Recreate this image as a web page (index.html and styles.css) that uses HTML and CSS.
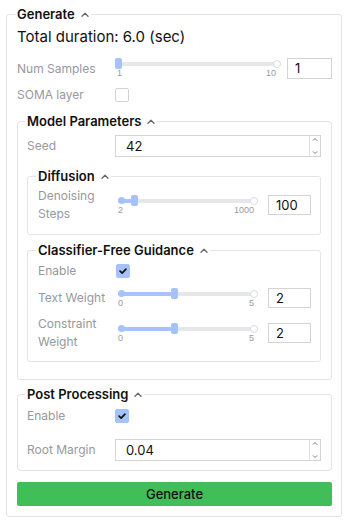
FILE: index.html
```html
<!DOCTYPE html>
<html>
<head>
<meta charset="utf-8">
<link rel="stylesheet" href="styles.css">
</head>
<body>
<fieldset class="box outer">
  <legend class="lg">Generate<svg class="caret" width="8" height="5" viewBox="0 0 8 5"><path d="M1 4.2 L4 1.2 L7 4.2"/></svg></legend>
  <div class="total">Total duration: 6.0 (sec)</div>

  <div class="row r-num">
    <div class="lbl l100">Num Samples</div>
    <div class="slider atmin" style="--p:0">
      <div class="track"><div class="rail"></div><div class="fill"></div><span class="start"></span><span class="end"></span><span class="thumb"></span></div>
      <div class="ticks"><span>1</span><span>10</span></div>
    </div>
    <div class="num n45">1</div>
  </div>

  <div class="row r-soma">
    <div class="lbl l100">SOMA layer</div>
    <span class="check"></span>
  </div>

  <fieldset class="box sub model">
    <legend class="lg">Model Parameters<svg class="caret" width="8" height="5" viewBox="0 0 8 5"><path d="M1 4.2 L4 1.2 L7 4.2"/></svg></legend>

    <div class="row r-seed">
      <div class="lbl l88">Seed</div>
      <div class="spin"><span class="val">42</span><span class="arrows"><svg width="10" height="22" viewBox="0 0 10 22"><path d="M3 5.5 L5 3.5 L7 5.5"/><path d="M3 16.5 L5 18.5 L7 16.5"/></svg></span></div>
    </div>

    <fieldset class="box inner diff">
      <legend class="lg">Diffusion<svg class="caret" width="8" height="5" viewBox="0 0 8 5"><path d="M1 4.2 L4 1.2 L7 4.2"/></svg></legend>
      <div class="row r-steps">
        <div class="lbl l80">Denoising Steps</div>
        <div class="slider" style="--p:0.098">
          <div class="track"><div class="rail"></div><div class="fill"></div><span class="start"></span><span class="end"></span><span class="thumb"></span></div>
          <div class="ticks"><span>2</span><span>1000</span></div>
        </div>
        <div class="num n43">100</div>
      </div>
    </fieldset>

    <fieldset class="box inner cfg">
      <legend class="lg">Classifier-Free Guidance<svg class="caret" width="8" height="5" viewBox="0 0 8 5"><path d="M1 4.2 L4 1.2 L7 4.2"/></svg></legend>
      <div class="row r-enable">
        <div class="lbl l80">Enable</div>
        <span class="check on"><svg width="14" height="14" viewBox="0 0 14 14"><path d="M3.6 7.2 L6 9.4 L10.4 4.8"/></svg></span>
      </div>
      <div class="row r-tw">
        <div class="lbl l80">Text Weight</div>
        <div class="slider" style="--p:0.4">
          <div class="track"><div class="rail"></div><div class="fill"></div><span class="start"></span><span class="end"></span><span class="thumb"></span></div>
          <div class="ticks"><span>0</span><span>5</span></div>
        </div>
        <div class="num n43">2</div>
      </div>
      <div class="row r-cw">
        <div class="lbl l80">Constraint Weight</div>
        <div class="slider" style="--p:0.4">
          <div class="track"><div class="rail"></div><div class="fill"></div><span class="start"></span><span class="end"></span><span class="thumb"></span></div>
          <div class="ticks"><span>0</span><span>5</span></div>
        </div>
        <div class="num n43">2</div>
      </div>
    </fieldset>
  </fieldset>

  <fieldset class="box sub post">
    <legend class="lg">Post Processing<svg class="caret" width="8" height="5" viewBox="0 0 8 5"><path d="M1 4.2 L4 1.2 L7 4.2"/></svg></legend>
    <div class="row r-penable">
      <div class="lbl l88">Enable</div>
      <span class="check on"><svg width="14" height="14" viewBox="0 0 14 14"><path d="M3.6 7.2 L6 9.4 L10.4 4.8"/></svg></span>
    </div>
    <div class="row r-root">
      <div class="lbl l88">Root Margin</div>
      <div class="spin"><span class="val">0.04</span><span class="arrows"><svg width="10" height="22" viewBox="0 0 10 22"><path d="M3 5.5 L5 3.5 L7 5.5"/><path d="M3 16.5 L5 18.5 L7 16.5"/></svg></span></div>
    </div>
  </fieldset>

  <button class="gen">Generate</button>
</fieldset>
</body>
</html>
```

FILE: styles.css
```css
* { box-sizing: border-box; }
html, body { margin: 0; background: #fff; }
body {
  font-family: Inter, "Noto Sans", sans-serif;
  color: #111;
  padding-top: 6px;
}
.box {
  border: 1px solid #e4e4e7;
  border-radius: 3px;
  margin: 0;
  min-width: 0;
  display: flex;
  flex-direction: column;
}
.outer {
  margin: 0 4px 0 6px;
  padding: 0 9px 10px 10px;
}
.sub { padding: 0 10px 0 9px; }
.model { margin-top: 9px; padding-bottom: 17px; }
.post { margin-top: 6px; padding-bottom: 9px; }
.inner { padding: 0 9px 9px 10px; }
.diff { margin-top: 11px; padding-bottom: 11px; }
.cfg { margin-top: 7px; padding-bottom: 10px; }

.lg {
  font-size: 13px;
  font-weight: 600;
  line-height: 16px;
  padding: 0 2px;
  margin-left: -2px;
  color: #111;
}
.caret {
  margin-left: 6px;
  vertical-align: 2px;
  fill: none;
  stroke: #666;
  stroke-width: 1.3;
  stroke-linecap: round;
  stroke-linejoin: round;
}
.total {
  margin-top: 5px;
  font-size: 15px;
  line-height: 20px;
  color: #111;
}
.row { display: flex; align-items: center; }
.lbl {
  flex: none;
  font-size: 12px;
  line-height: 18px;
  color: #98989d;
}
.l100 { width: 100px; }
.l88 { width: 88px; }
.l80 { width: 80px; }

.r-num { margin-top: 11px; height: 21px; }
.r-soma { margin-top: 7px; height: 18px; }
.r-seed { margin-top: 6px; }
.r-steps { margin-top: 3px; }
.r-enable { margin-top: 4px; }
.r-tw { margin-top: 8px; }
.r-cw { margin-top: 7px; }
.r-penable { margin-top: 5px; }
.r-root { margin-top: 14px; }

.slider {
  flex: 1;
  min-width: 0;
  display: flex;
  flex-direction: column;
}
.track { position: relative; height: 11px; }
.rail {
  position: absolute; left: 3px; right: 3px; top: 4px; height: 4px;
  background: #e5e7eb; border-radius: 2px;
}
.fill {
  position: absolute; left: 3px; top: 4px; height: 4px;
  width: calc((100% - 7px) * var(--p));
  background: #a5c2fb; border-radius: 2px;
}
.start {
  position: absolute; left: 0; top: 2px; width: 7px; height: 7px;
  border-radius: 50%; background: #a5c2fb;
}
.end {
  position: absolute; right: 0; top: 2px; width: 8px; height: 8px;
  border-radius: 50%; background: #fff; border: 1.5px solid #d9dce1;
}
.thumb {
  position: absolute; top: 0; width: 7px; height: 11px;
  left: calc(3px + (100% - 7px) * var(--p) - 3px);
  background: #a5c2fb; border-radius: 2px;
}
.atmin .start, .atmin .fill { display: none; }
.atmin .thumb { left: -2px; }
.ticks {
  display: flex; justify-content: space-between;
  font-family: "Liberation Sans", Arial, sans-serif;
  font-size: 9px; line-height: 9px; color: #9a9a9f;
  padding: 0 4px 0 0;
}
.r-num .ticks { padding-right: 5px; }
.r-num .slider { align-self: flex-start; }

.num {
  flex: none;
  height: 21px;
  border: 1px solid #d4d4d8;
  background: #fff;
  font-size: 13px;
  line-height: 19px;
  padding-left: 7px;
  color: #111;
}
.n45 { width: 45px; margin-left: 6px; }
.n43 { width: 43px; height: 20px; line-height: 18px; margin-left: 10px; }

.check {
  flex: none;
  width: 14px; height: 14px;
  border: 1px solid #cfd2d8;
  border-radius: 2px;
  background: #fff;
  margin-left: -2px;
  display: flex; align-items: center; justify-content: center;
}
.check.on { background: #a5c2fb; border-color: #a5c2fb; }
.check svg { fill: none; stroke: #111; stroke-width: 2; stroke-linecap: round; stroke-linejoin: round; }
.r-enable .check { margin-left: -2px; }
.r-penable .check { margin-left: 0; }

.spin {
  flex: 1;
  height: 22px;
  border: 1px solid #d4d4d8;
  display: flex;
  align-items: center;
  justify-content: space-between;
}
.spin .val { font-size: 13px; padding-left: 10px; color: #111; }
.arrows {
  width: 11px; height: 20px;
  border-left: 1px solid #dedee2;
  display: flex; align-items: center; justify-content: center;
}
.arrows svg { fill: none; stroke: #777; stroke-width: 1; }

.gen {
  margin-top: 11px;
  height: 24px;
  border: none;
  border-radius: 2px;
  background: #41be58;
  color: #111;
  font-family: Inter, "Noto Sans", sans-serif;
  font-size: 13px;
  font-weight: 500;
  padding: 0;
}
```
